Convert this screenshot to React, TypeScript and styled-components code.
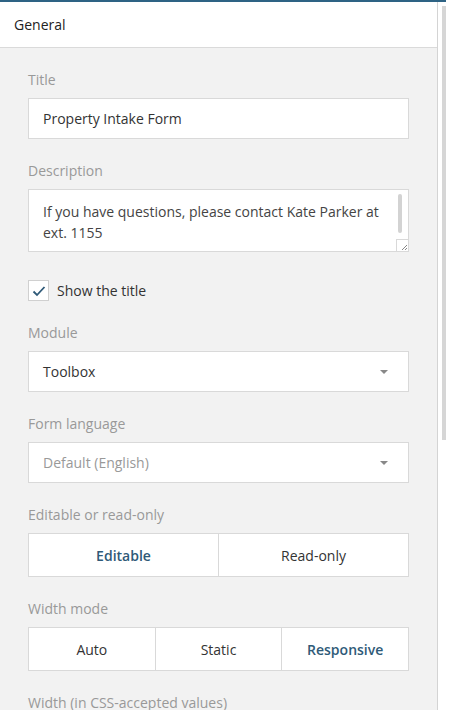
import React from "react";
import styled, { createGlobalStyle } from "styled-components";

const Global = createGlobalStyle`
  html, body { margin: 0; padding: 0; background: #ffffff; }
  body { font-family: "Open Sans", "Noto Sans", Arial, sans-serif; }
  * { box-sizing: border-box; }
`;

const Frame = styled.div`
  width: 446px;
  height: 710px;
  border-top: 2px solid #2e6384;
  display: flex;
  overflow: hidden;
`;

const Panel = styled.div`
  width: 438px;
  flex: none;
  border-right: 1px solid #d4d4d4;
  background: #f2f2f2;
  display: flex;
  flex-direction: column;
`;

const Header = styled.div`
  flex: none;
  height: 46px;
  background: #ffffff;
  border-bottom: 1px solid #dadada;
  display: flex;
  align-items: center;
  padding-left: 14px;
  font-size: 14px;
  color: #222;
`;

const Body = styled.div`
  flex: none;
  padding: 22px 28px 0 28px;
  display: flex;
  flex-direction: column;
  gap: 22px;
`;

const Gutter = styled.div`
  flex: 1;
  background: #fff;
  padding: 4px 0 0 4px;
`;

const Thumb = styled.div`
  width: 5px;
  height: 434px;
  background: #d6d6d6;
`;

const Field = styled.div`
  display: flex;
  flex-direction: column;
  gap: 8px;
`;

const Label = styled.div`
  font-size: 14px;
  line-height: 20px;
  color: #999;
`;

const Box = styled.div`
  width: 381px;
  height: 41px;
  background: #fff;
  border: 1px solid #d9d9d9;
  display: flex;
  align-items: center;
  padding: 0 14px;
  font-size: 14px;
`;

const BoxText = styled.span<{ $muted?: boolean }>`
  flex: 1;
  color: ${(p) => (p.$muted ? "#999" : "#333")};
`;

const Arrow = styled.span`
  width: 0;
  height: 0;
  border-left: 4px solid transparent;
  border-right: 4px solid transparent;
  border-top: 4px solid #888;
  margin-right: 6px;
`;

const TextArea = styled.div`
  width: 381px;
  height: 63px;
  background: #fff;
  border: 1px solid #d9d9d9;
  display: flex;
`;

const AreaText = styled.div`
  flex: 1;
  padding: 11px 0 0 14px;
  font-size: 14px;
  line-height: 21px;
  color: #444;
`;

const AreaScroll = styled.div`
  width: 16px;
  display: flex;
  flex-direction: column;
  align-items: center;
`;

const AreaThumb = styled.div`
  margin-top: 4px;
  width: 4px;
  height: 39px;
  border-radius: 2px;
  background: #d3d3d3;
`;

const Grip = styled.div`
  margin-top: auto;
  width: 12px;
  height: 12px;
  align-self: flex-end;
  border-left: 1px solid #d9d9d9;
  border-top: 1px solid #d9d9d9;
  display: flex;
  align-items: flex-end;
  justify-content: flex-end;
`;

const CheckRow = styled.label`
  display: flex;
  align-items: center;
  gap: 8px;
  margin-top: 6px;
  font-size: 14px;
  color: #333;
`;

const CheckBox = styled.span`
  width: 21px;
  height: 21px;
  background: #fff;
  border: 1px solid #d0d0d0;
  display: flex;
  align-items: center;
  justify-content: center;
`;

const Segments = styled.div`
  width: 381px;
  height: 44px;
  display: flex;
  background: #fff;
  border: 1px solid #d9d9d9;
`;

const Segment = styled.div<{ $active?: boolean }>`
  flex: 1;
  display: flex;
  align-items: center;
  justify-content: center;
  font-size: 14px;
  font-weight: ${(p) => (p.$active ? 600 : 400)};
  color: ${(p) => (p.$active ? "#2f5a78" : "#333")};
  & + & {
    border-left: 1px solid #d9d9d9;
  }
`;

export default function App() {
  return (
    <>
      <Global />
      <Frame>
        <Panel>
          <Header>General</Header>
          <Body>
            <Field>
              <Label>Title</Label>
              <Box>
                <BoxText>Property Intake Form</BoxText>
              </Box>
            </Field>
            <Field>
              <Label>Description</Label>
              <TextArea>
                <AreaText>
                  If you have questions, please contact Kate Parker at ext. 1155
                </AreaText>
                <AreaScroll>
                  <AreaThumb />
                  <Grip>
                    <svg width="8" height="8" viewBox="0 0 8 8">
                      <path d="M7 2 L2 7 M7 5 L5 7" stroke="#888" strokeWidth="1" fill="none" />
                    </svg>
                  </Grip>
                </AreaScroll>
              </TextArea>
            </Field>
            <CheckRow>
              <CheckBox>
                <svg width="14" height="12" viewBox="0 0 14 12">
                  <path d="M1.5 6.5 L5 10 L12.5 2" stroke="#2f5a78" strokeWidth="1.8" fill="none" />
                </svg>
              </CheckBox>
              Show the title
            </CheckRow>
            <Field>
              <Label>Module</Label>
              <Box>
                <BoxText>Toolbox</BoxText>
                <Arrow />
              </Box>
            </Field>
            <Field>
              <Label>Form language</Label>
              <Box>
                <BoxText $muted>Default (English)</BoxText>
                <Arrow />
              </Box>
            </Field>
            <Field>
              <Label>Editable or read-only</Label>
              <Segments>
                <Segment $active>Editable</Segment>
                <Segment>Read-only</Segment>
              </Segments>
            </Field>
            <Field>
              <Label>Width mode</Label>
              <Segments>
                <Segment>Auto</Segment>
                <Segment>Static</Segment>
                <Segment $active>Responsive</Segment>
              </Segments>
            </Field>
            <Field>
              <Label>Width (in CSS-accepted values)</Label>
            </Field>
          </Body>
        </Panel>
        <Gutter>
          <Thumb />
        </Gutter>
      </Frame>
    </>
  );
}
